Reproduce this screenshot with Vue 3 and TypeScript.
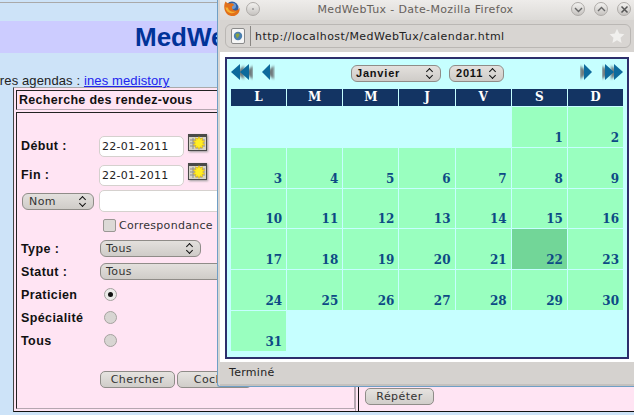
<script setup lang="ts">
const heads: string[] = ['L', 'M', 'M', 'J', 'V', 'S', 'D']
const cells: (number | null)[] = [
  null, null, null, null, null, ...Array.from({ length: 31 }, (_, i) => i + 1), null, null, null, null, null, null,
]
</script>

<template>
  <div class="desk">
    <div class="page">
      <div class="band"><span class="brand">MedWebTux</span></div>
      <div class="agendas">Autres agendas : <a class="link">ines medistory</a></div>
      <div class="frame">
        <div class="left">
          <div class="box head">Recherche des rendez-vous</div>
          <div class="box form">
            <div class="row r-date">
              <label>Début :</label><span class="field date">22-01-2011</span>
              <svg class="calicon" width="21" height="19" viewBox="0 0 21 19">
                <rect x="1" y="1" width="19" height="17" fill="#4a4a48" />
                <rect x="2" y="4" width="17" height="13" fill="#d6d4c8" />
                <path d="M3 7h15M3 10h15M3 13h15M6 5v11M10 5v11M14 5v11" stroke="#8f8f88" stroke-width="1" />
                <path d="M12 3.500l1.200 2.600 2.500-1.300-.7 2.800 2.800.5-2.200 1.900 2.200 1.900-2.800.5.7 2.800-2.500-1.300-1.200 2.600-1.200-2.600-2.500 1.300.7-2.800-2.800-.5 2.200-1.900-2.200-1.900 2.800-.5-.7-2.800 2.500 1.300z" fill="#ffee22" stroke="#d9a400" stroke-width=".5" />
              </svg>
            </div>
            <div class="row r-date">
              <label>Fin :</label><span class="field date">22-01-2011</span>
              <svg class="calicon" width="21" height="19" viewBox="0 0 21 19">
                <rect x="1" y="1" width="19" height="17" fill="#4a4a48" />
                <rect x="2" y="4" width="17" height="13" fill="#d6d4c8" />
                <path d="M3 7h15M3 10h15M3 13h15M6 5v11M10 5v11M14 5v11" stroke="#8f8f88" stroke-width="1" />
                <path d="M12 3.500l1.200 2.600 2.500-1.300-.7 2.800 2.800.5-2.200 1.900 2.200 1.900-2.800.5.7 2.800-2.500-1.300-1.200 2.600-1.200-2.600-2.500 1.300.7-2.800-2.800-.5 2.200-1.900-2.200-1.900 2.800-.5-.7-2.800 2.500 1.300z" fill="#ffee22" stroke="#d9a400" stroke-width=".5" />
              </svg>
            </div>
            <div class="row r-name">
              <span class="sel nom">Nom<b class="updown"></b></span><span class="field wide"></span>
            </div>
            <div class="row r-check"><span class="check"></span><span class="ctext">Correspondance</span></div>
            <div class="row r-sel"><label>Type :</label><span class="sel s1">Tous<b class="updown"></b></span></div>
            <div class="row r-sel"><label>Statut :</label><span class="sel s2">Tous</span></div>
            <div class="row r-radio"><label>Praticien</label><span class="radio on"></span></div>
            <div class="row r-radio"><label>Spécialité</label><span class="radio"></span></div>
            <div class="row r-radio"><label>Tous</label><span class="radio"></span></div>
            <div class="row r-btn"><span class="btn b1">Chercher</span><span class="btn b2">Cocher</span></div>
          </div>
        </div>
        <div class="right"><span class="btn b3">Répéter</span></div>
      </div>
    </div>

    <div class="win">
      <div class="titlebar">
        <svg class="ff" width="17" height="17" viewBox="0 0 17 17">
          <circle cx="9" cy="8" r="6.500" fill="#2f5fa5" />
          <circle cx="10" cy="6" r="3" fill="#6f9ad0" />
          <path d="M2.500 1.500C.5 5 .8 10.500 4 14c3.500 3 9 2.800 11.500-1 1-1.600 1.300-3.500 1-5.200-1 1.800-2.300 2.600-3.800 2.600-2.200 0-3.700-1.400-3.700-3 0-1.200 1-1.900 2.200-2.100C10.200 3.300 8.500 3 7 3.600 6 3.200 5.500 3 4.800 3.400 4 2.900 3.200 2.300 2.500 1.500z" fill="#e2701a" />
          <path d="M2.500 7c.2 3 2.300 6 6 6.200 2 .1 3.800-.8 5-2.200-1.500 1-3.800 1.200-5.600.2C6 10.500 5 9 5 7.500 4.200 7.800 3.200 7.600 2.500 7z" fill="#f6b233" />
        </svg>
        <span class="wbtn menu"><i class="dot"></i></span>
        <span class="title">MedWebTux - Date-Mozilla Firefox</span>
        <span class="wbtn a1"><svg width="11" height="11" viewBox="0 0 11 11"><path d="M2 4l3.500 3.500L9 4" fill="none" stroke="#666" stroke-width="1.400" /></svg></span>
        <span class="wbtn a2"><svg width="11" height="11" viewBox="0 0 11 11"><path d="M2 7l3.500-3.500L9 7" fill="none" stroke="#666" stroke-width="1.400" /></svg></span>
        <span class="wbtn a3"><svg width="11" height="11" viewBox="0 0 11 11"><path d="M2.500 2.500l6 6M8.500 2.500l-6 6" fill="none" stroke="#555" stroke-width="1.500" /></svg></span>
      </div>
      <div class="urlwrap">
        <div class="urlbar">
          <span class="fav">
            <svg width="14" height="16" viewBox="0 0 14 16">
              <rect x=".5" y=".5" width="13" height="15" rx="1.500" fill="#f6f6f6" stroke="#8a8a8a" />
              <circle cx="7" cy="8" r="4.200" fill="#4a7fb0" />
              <path d="M4.500 6.500c1-1.500 4-1.500 4 0S7 9 6 10.500z" fill="#8aa33f" />
            </svg>
          </span>
          <span class="url">http://localhost/MedWebTux/calendar.html</span>
          <svg class="star" width="16" height="16" viewBox="0 0 16 16"><path d="M8 .8l2.200 4.800 5.200.6-3.900 3.500 1.100 5.200L8 12.200l-4.600 2.700 1.100-5.200L.6 6.200l5.200-.6z" fill="#f1f0ee" /></svg>
        </div>
      </div>
      <div class="content">
        <div class="cal">
          <div class="nav">
            <div class="arrows">
              <svg width="22" height="17" viewBox="0 0 22 17"><path class="sh" d="M13 1.500v14l-8-7zM22 1.500v14l-8-7z" /><path class="ar" d="M9 0v16L0 8zM18 0v16L9 8z" /></svg>
              <svg width="13" height="17" viewBox="0 0 13 17"><path class="sh" d="M12 1.500v14l-8-7z" /><path class="ar" d="M8 0v16L0 8z" /></svg>
            </div>
            <div class="selects">
              <span class="sel month">Janvier<b class="updown"></b></span>
              <span class="sel year">2011<b class="updown"></b></span>
            </div>
            <div class="arrows">
              <svg width="13" height="17" viewBox="0 0 13 17"><path class="sh" d="M0 1.500v14l8-7z" /><path class="ar" d="M4 0v16l8-8z" /></svg>
              <svg width="21" height="17" viewBox="0 0 21 17"><path class="sh" d="M0 1.500v14l8-7zM9 1.500v14l8-7z" /><path class="ar" d="M3 0v16l9-8zM12 0v16l9-8z" /></svg>
            </div>
          </div>
          <div class="grid">
            <div v-for="(h, i) in heads" :key="'h' + i" class="hd">{{ h }}</div>
            <div
              v-for="(c, i) in cells"
              :key="i"
              class="cell"
              :class="{ day: c !== null, today: c === 22 }"
            >{{ c }}</div>
          </div>
        </div>
      </div>
      <div class="status">Terminé</div>
    </div>
  </div>
</template>

<style>
html, body { margin: 0; padding: 0; }
</style>

<style scoped>
.desk {
  position: relative;
  width: 634px;
  height: 415px;
  overflow: hidden;
  background: #cde3f8;
  font-family: "Liberation Sans", sans-serif;
}
.page {
  width: 634px;
  height: 415px;
  box-sizing: border-box;
  padding-top: 2px;
}
.page::before {
  content: "";
  display: block;
  height: 1px;
  margin-bottom: -1px;
  background: #a9a9a9;
}
.band {
  height: 32px;
  margin-top: 19px;
  background: #ccccff;
  white-space: nowrap;
  overflow: hidden;
}
.brand {
  display: block;
  margin-left: 135px;
  font-size: 26px;
  line-height: 32px;
  font-weight: bold;
  color: #003399;
}
.agendas {
  height: 14px;
  margin: 20px 0 0 -20px;
  font-size: 13px;
  line-height: 16px;
  letter-spacing: .12px;
  color: #222;
  white-space: nowrap;
}
.link { color: #2222ee; text-decoration: underline; }
.frame {
  display: flex;
  width: 621px;
  height: 325px;
  margin-left: 13px;
  box-sizing: border-box;
  background: #ffe4f3;
  border-left: 1px solid #444;
  border-top: 1px solid #aaa;
  border-bottom: 1px solid #111;
}
.left { width: 342px; padding: 2px 0 2px 2px; box-sizing: border-box; border-right: 1px solid #b5a6b0; }
.box { box-sizing: border-box; border: 1px solid #222; border-right-color: #b5a6b0; border-bottom-color: #b5a6b0; }
.head {
  height: 20px;
  font-size: 12.500px;
  line-height: 18px;
  font-weight: bold;
  letter-spacing: .3px;
  padding-left: 2px;
  color: #111;
}
.form { height: 297px; margin-top: 2px; padding: 23px 0 0 4px; }
.right { flex: 1; border-left: 1px solid #111; margin-left: 2px; padding: 300px 0 0 6px; box-sizing: border-box; }
.row { display: flex; align-items: center; position: relative; }
.row label {
  width: 78px;
  flex: none;
  font-size: 12.500px;
  font-weight: bold;
  letter-spacing: .4px;
  color: #111;
}
.r-date { height: 21px; margin-bottom: 8px; }
.r-date label { padding-bottom: 2px; }
.field {
  box-sizing: border-box;
  display: block;
  height: 21px;
  background: #fff;
  border: 1px solid #d5d1ce;
  border-radius: 5px;
  font-family: "DejaVu Sans", sans-serif;
  font-size: 11px;
  line-height: 20px;
  letter-spacing: .25px;
  padding-left: 2px;
  color: #222;
}
.date { width: 85px; }
.wide { width: 140px; height: 22px; margin-left: 5px; }
.calicon {
  display: block;
  flex: none;
  margin: -8px 0 0 3px;
  filter: drop-shadow(1px 1px 1px #999);
}
.sel {
  box-sizing: border-box;
  display: flex;
  align-items: center;
  position: relative;
  height: 17px;
  background: linear-gradient(#e3e0dd, #cfccc8);
  border: 1px solid #8f8c88;
  border-radius: 6px;
  font-family: "DejaVu Sans", sans-serif;
  font-size: 11px;
  letter-spacing: .4px;
  color: #333;
  padding-left: 5px;
}
.updown { position: absolute; right: 6px; top: 1px; width: 8px; height: 13px; }
.updown::before, .updown::after {
  content: "";
  position: absolute;
  left: 1px;
  width: 4px;
  height: 4px;
  border-left: 1.500px solid #111;
  border-top: 1.500px solid #111;
}
.updown::before { top: 2px; transform: rotate(45deg); }
.updown::after { bottom: 2px; transform: rotate(225deg); }
.nom { width: 72px; margin: 0 0 0 1px; padding-left: 6px; }
.r-name { height: 22px; margin: -4px 0 6px; }
.r-check { height: 14px; padding-left: 82px; margin-bottom: 8px; }
.check {
  box-sizing: border-box;
  width: 13px;
  height: 13px;
  background: #dcd9d6;
  border: 1px solid #9a9794;
  border-radius: 2px;
  flex: none;
}
.ctext { margin-left: 3px; font-family: "DejaVu Sans", sans-serif; font-size: 11px; letter-spacing: .3px; color: #333; }
.r-sel { height: 17px; margin-bottom: 6px; }
.r-sel label { width: 79px; }
.s1 { width: 101px; }
.s2 { width: 160px; }
.r-radio { height: 17px; margin-bottom: 6px; }
.radio {
  box-sizing: border-box;
  width: 13px;
  height: 13px;
  margin-left: 5px;
  background: #d8d5d2;
  border: 1px solid #a5a29f;
  border-radius: 50%;
  position: relative;
}
.on { background: #ecebe9; }
.on::after {
  content: "";
  position: absolute;
  left: 3px;
  top: 3px;
  width: 5px;
  height: 5px;
  border-radius: 50%;
  background: #111;
}
.r-btn { margin-top: 22px; padding-left: 79px; gap: 2px; }
.btn {
  box-sizing: border-box;
  display: block;
  height: 17px;
  text-align: center;
  background: linear-gradient(#e6e3e0, #d0cdc9);
  border: 1px solid #8f8c88;
  border-radius: 5px;
  font-family: "DejaVu Sans", sans-serif;
  font-size: 11px;
  line-height: 15px;
  letter-spacing: .45px;
  color: #333;
  flex: none;
}
.b1 { width: 75px; }
.b2 { width: 75px; }
.b3 { width: 69px; }

.win {
  position: absolute;
  left: 217px;
  top: 0;
  width: 417px;
  height: 387px;
  box-sizing: border-box;
  display: flex;
  flex-direction: column;
  border-left: 1px solid #6f9fc6;
  border-bottom: 1px solid #6f9fc6;
  border-bottom-left-radius: 3px;
  padding-left: 2px;
  background: #d9d6d3;
}
.titlebar {
  height: 20px;
  flex: none;
  position: relative;
  background: linear-gradient(#eeecea, #dcdad7);
  font-family: "DejaVu Sans", sans-serif;
}
.ff { position: absolute; left: 3px; top: 0; }
.wbtn {
  position: absolute;
  top: 2px;
  box-sizing: border-box;
  width: 14px;
  height: 14px;
  display: flex;
  align-items: center;
  justify-content: center;
  border-radius: 50%;
  border: 1px solid #aeaba8;
  background: linear-gradient(#f2f1ef, #c6c3c0);
}
.menu { left: 26px; }
.dot { width: 2px; height: 2px; border-radius: 50%; background: #999; }
.a1 { left: 351px; }
.a2 { left: 374px; }
.a3 { left: 397px; }
.title {
  display: block;
  text-align: center;
  font-size: 11px;
  line-height: 19px;
  letter-spacing: .35px;
  color: #67615c;
  padding-right: 23px;
}
.urlwrap {
  height: 32px;
  flex: none;
  box-sizing: border-box;
  padding: 4px 3px 0 5px;
  background: #d7d4d1;
}
.urlbar {
  box-sizing: border-box;
  height: 24px;
  display: flex;
  align-items: center;
  border: 1px solid #bab7b4;
  border-radius: 6px;
  background: #d8d5d2;
}
.fav {
  box-sizing: border-box;
  width: 25px;
  height: 20px;
  display: flex;
  align-items: center;
  justify-content: center;
  border-right: 1px solid #8a8784;
  flex: none;
}
.url {
  flex: 1;
  margin-left: 4px;
  font-family: "DejaVu Sans", sans-serif;
  font-size: 11px;
  letter-spacing: .45px;
  color: #222;
}
.star { margin-right: 5px; }
.content {
  flex: 1;
  box-sizing: border-box;
  padding: 5px 5px 3px 5px;
  background: #fff;
}
.cal {
  box-sizing: border-box;
  height: 302px;
  border: 2px solid #2d2f6c;
  background: #c6ffff;
  padding: 0 4px;
}
.nav {
  height: 30px;
  display: flex;
  align-items: center;
}
.arrows { display: flex; gap: 9px; height: 17px; margin-top: -3px; }
.ar { fill: #0d6a9c; }
.sh { fill: #6f7a7c; filter: blur(.8px); }
.selects { flex: 1; display: flex; justify-content: center; gap: 8px; margin-top: -2px; }
.month, .year {
  font-family: "Liberation Sans", sans-serif;
  font-weight: bold;
  font-size: 11px;
  letter-spacing: .8px;
  color: #111;
  box-sizing: border-box;
}
.month { width: 90px; padding-left: 4px; }
.year { width: 55px; padding-left: 6px; }
.grid {
  display: grid;
  grid-template-columns: repeat(7, 1fr);
  grid-template-rows: 17px repeat(6, 39.800px);
  gap: 1px;
  width: 392px;
}
.hd {
  background: #133463;
  color: #fff;
  text-align: center;
  font-family: "DejaVu Serif", serif;
  font-weight: bold;
  font-size: 12px;
  line-height: 17px;
}
.cell {
  display: flex;
  align-items: flex-end;
  justify-content: flex-end;
  padding: 0 4px 2px 0;
  font-family: "DejaVu Serif", serif;
  font-weight: bold;
  font-size: 12px;
  line-height: 14px;
  color: #0d4a85;
}
.day { background: #99ffbf; }
.today { background: #72d698; }
.status {
  height: 24px;
  flex: none;
  box-sizing: border-box;
  padding-left: 9px;
  background: #d5d2cf;
  border-bottom: 2px solid #c4c1be;
  font-family: "DejaVu Sans", sans-serif;
  font-size: 11px;
  line-height: 22px;
  letter-spacing: .3px;
  color: #222;
}
</style>
